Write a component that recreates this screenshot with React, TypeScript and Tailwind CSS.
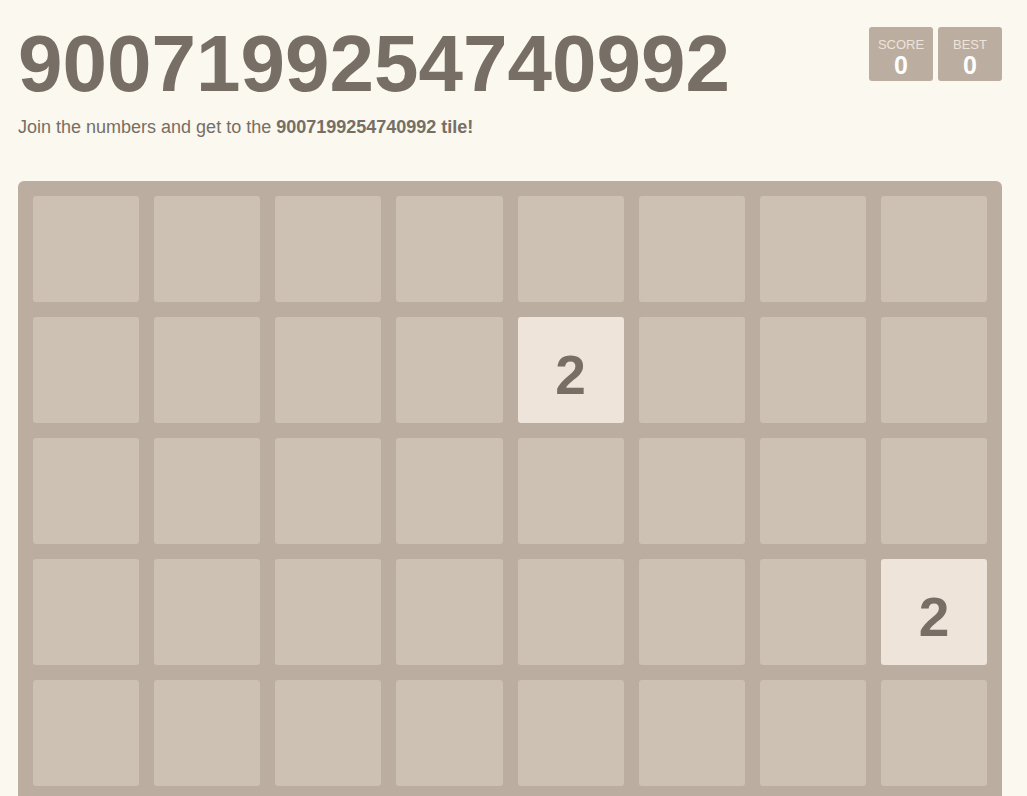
import React from "react";

const ROWS = 8;
const COLS = 8;
const tiles: Record<string, number> = { "1-4": 2, "3-7": 2 };

export default function App() {
  const cells = [];
  for (let r = 0; r < ROWS; r++) {
    for (let c = 0; c < COLS; c++) {
      const v = tiles[`${r}-${c}`];
      cells.push(
        v ? (
          <div
            key={`${r}-${c}`}
            className="h-[106px] rounded-[3px] bg-[#eee4da] flex items-center justify-center pt-[10px] text-[55px] font-bold text-[#776e65] leading-none"
          >
            {v}
          </div>
        ) : (
          <div key={`${r}-${c}`} className="h-[106px] rounded-[3px] bg-[#cdc1b4]" />
        )
      );
    }
  }

  return (
    <div
      className="h-screen overflow-hidden bg-[#faf8ef] text-[#776e65]"
      style={{ fontFamily: '"Liberation Sans", Arial, sans-serif' }}
    >
      <div className="ml-[18px] w-[984px]">
        <div className="flex justify-between">
          <h1 className="pt-[24px] text-[80px] font-bold leading-none m-0">9007199254740992</h1>
          <div className="flex gap-[5px] pt-[27px]">
            <div className="w-[64px] h-[54px] rounded-[3px] bg-[#bbada0] flex flex-col items-center pt-[11px]">
              <span className="text-[13px] leading-none text-[#eee4da] uppercase">Score</span>
              <span className="text-[25px] leading-none font-bold text-white mt-[2px]">0</span>
            </div>
            <div className="w-[64px] h-[54px] rounded-[3px] bg-[#bbada0] flex flex-col items-center pt-[11px]">
              <span className="text-[13px] leading-none text-[#eee4da] uppercase">Best</span>
              <span className="text-[25px] leading-none font-bold text-white mt-[2px]">0</span>
            </div>
          </div>
        </div>
        <p className="mt-[12px] text-[18px] leading-[22px]">
          Join the numbers and get to the <strong className="font-bold">9007199254740992 tile!</strong>
        </p>
        <div className="mt-[43px] rounded-[6px] bg-[#bbada0] p-[15px] grid grid-cols-8 gap-[15px]">
          {cells}
        </div>
      </div>
    </div>
  );
}
